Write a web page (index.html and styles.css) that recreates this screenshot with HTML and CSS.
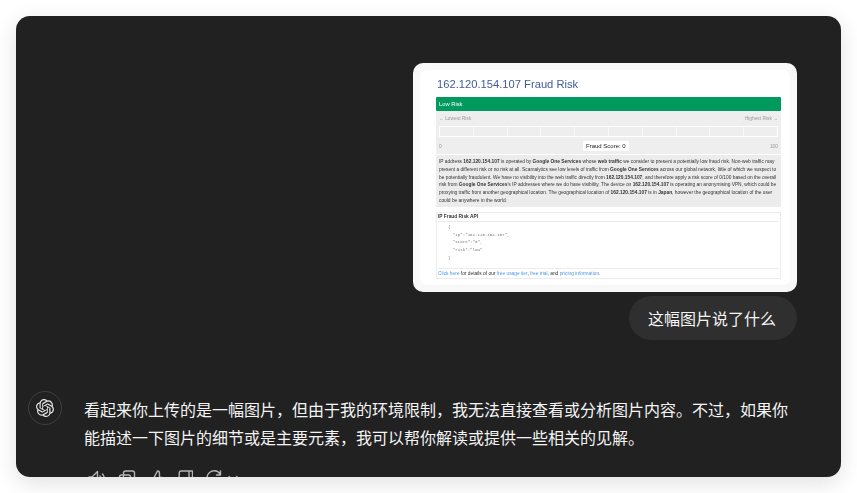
FILE: index.html
```html
<!DOCTYPE html>
<html lang="zh-CN">
<head>
<meta charset="UTF-8" />
<meta name="viewport" content="width=device-width, initial-scale=1.0" />
<title>Chat</title>
<link rel="stylesheet" href="styles.css">
</head>
<body>
<div class="chat">
  <div class="user-turn">
    <div class="shot">
      <div class="shot-inner">
        <h2 class="shot-title">162.120.154.107 Fraud Risk</h2>
        <div class="risk-head">Low Risk</div>
        <div class="risk-panel">
          <div class="risk-ends"><span>&larr; Lowest Risk</span><span>Highest Risk &rarr;</span></div>
          <div class="risk-bar">
            <i></i><i></i><i></i><i></i><i></i><i></i><i></i><i></i><i></i><i></i>
          </div>
          <div class="risk-score"><span>0</span><b>Fraud Score: 0</b><span>100</span></div>
        </div>
        <div class="risk-text">
          <div>IP address <b>162.120.154.107</b> is operated by <b>Google One Services</b> whose <b>web traffic</b> we consider to present a potentially low fraud risk. Non-web traffic may</div>
          <div>present a different risk or no risk at all. Scamalytics see low levels of traffic from <b>Google One Services</b> across our global network, little of which we suspect to</div>
          <div>be potentially fraudulent. We have no visibility into the web traffic directly from <b>162.120.154.107</b>, and therefore apply a risk score of 0/100 based on the overall</div>
          <div>risk from <b>Google One Services</b>'s IP addresses where we do have visibility. The device on <b>162.120.154.107</b> is operating an anonymising VPN, which could be</div>
          <div>proxying traffic from another geographical location. The geographical location of <b>162.120.154.107</b> is in <b>Japan</b>, however the geographical location of the user</div>
          <div>could be anywhere in the world.</div>
        </div>
        <div class="api-box">
          <div class="api-title">IP Fraud Risk API</div>
          <pre class="api-code">{
  "ip":"162.120.154.107",
  "score":"0",
  "risk":"low"
}</pre>
          <div class="api-foot"><a>Click here</a> for details of our <a>free usage tier</a>, <a>free trial</a>, and <a>pricing information</a>.</div>
        </div>
      </div>
    </div>
    <div class="bubble">这幅图片说了什么</div>
  </div>

  <div class="reply">
    <div class="avatar">
      <svg viewBox="0 0 24 24" width="18" height="18" fill="#e6e6e6"><path d="M22.2819 9.8211a5.9847 5.9847 0 0 0-.5157-4.9108 6.0462 6.0462 0 0 0-6.5098-2.9A6.0651 6.0651 0 0 0 4.9807 4.1818a5.9847 5.9847 0 0 0-3.9977 2.9 6.0462 6.0462 0 0 0 .7427 7.0966 5.98 5.98 0 0 0 .511 4.9107 6.051 6.051 0 0 0 6.5146 2.9001A5.9847 5.9847 0 0 0 13.2599 24a6.0557 6.0557 0 0 0 5.7718-4.2058 5.9894 5.9894 0 0 0 3.9977-2.9001 6.0557 6.0557 0 0 0-.7475-7.0729zm-9.022 12.6081a4.4755 4.4755 0 0 1-2.8764-1.0408l.1419-.0804 4.7783-2.7582a.7948.7948 0 0 0 .3927-.6813v-6.7369l2.02 1.1686a.071.071 0 0 1 .038.052v5.5826a4.504 4.504 0 0 1-4.4945 4.4944zm-9.6607-4.1254a4.4708 4.4708 0 0 1-.5346-3.0137l.142.0852 4.783 2.7582a.7712.7712 0 0 0 .7806 0l5.8428-3.3685v2.3324a.0804.0804 0 0 1-.0332.0615L9.74 19.9502a4.4992 4.4992 0 0 1-6.1408-1.6464zM2.3408 7.8956a4.485 4.485 0 0 1 2.3655-1.9728V11.6a.7664.7664 0 0 0 .3879.6765l5.8144 3.3543-2.0201 1.1685a.0757.0757 0 0 1-.071 0l-4.8303-2.7865A4.504 4.504 0 0 1 2.3408 7.872zm16.5963 3.8558L13.1038 8.364 15.1192 7.2a.0757.0757 0 0 1 .071 0l4.8303 2.7913a4.4944 4.4944 0 0 1-.6765 8.1042v-5.6772a.79.79 0 0 0-.407-.667zm2.0107-3.0231l-.142-.0852-4.7735-2.7818a.7759.7759 0 0 0-.7854 0L9.409 9.2297V6.8974a.0662.0662 0 0 1 .0284-.0615l4.8303-2.7866a4.4992 4.4992 0 0 1 6.6802 4.66zM8.3065 12.863l-2.02-1.1638a.0804.0804 0 0 1-.038-.0567V6.0742a4.4992 4.4992 0 0 1 7.3757-3.4537l-.142.0805L8.704 5.459a.7948.7948 0 0 0-.3927.6813zm1.0976-2.3654l2.602-1.4998 2.6069 1.4998v2.9994l-2.5974 1.4997-2.6067-1.4997Z"/></svg>
    </div>
    <div class="reply-body">
      <p class="reply-text">看起来你上传的是一幅图片，但由于我的环境限制，我无法直接查看或分析图片内容。不过，如果你能描述一下图片的细节或是主要元素，我可以帮你解读或提供一些相关的见解。</p>
      <div class="actions">
        <svg viewBox="0 0 18 18" width="18" height="18"><path d="M1 8.500l1-1.500h3l5.500-5.500v15L5 11H2zM13 6c1.500 1.500 1.500 5 0 6.500M15.500 4c2.500 3 2.500 7.500 0 10.500"/></svg>
        <svg viewBox="0 0 18 18" width="18" height="18"><rect x="5.500" y="1" width="11" height="11" rx="2"/><rect x="1.500" y="5" width="11" height="11" rx="2"/></svg>
        <svg viewBox="0 0 15 18" width="15" height="18"><path d="M4.500 8.500L8.500 1c1.500 0 2 1 2 2.500v4h2.500c1 0 1.500 1 1.300 2l-1.300 6c-.2.800-.8 1.500-1.700 1.500H1V8.500z"/></svg>
        <svg class="down" viewBox="0 0 15 18" width="15" height="18"><path d="M3 1h11.500v10H11V1M3 1C2 1 1.500 1.500 1.300 2.500L1 10c0 1 .5 1.500 1.500 1.500h3"/></svg>
        <svg viewBox="0 0 16 18" width="16" height="18"><path d="M14 4A7 7 0 1 0 15 9M14.500 1v4H10.500"/></svg>
        <svg class="more" viewBox="0 0 12 18" width="12" height="18"><path d="M2 6.500l4 4 4-4"/></svg>
      </div>
    </div>
  </div>
</div>
</body>
</html>
```

FILE: styles.css
```css
* {
  margin: 0;
  padding: 0;
  box-sizing: border-box;
}

body {
  height: 100vh;
  padding: 16px;
  background: #fff;
  font-family: "Noto Sans CJK SC", "Liberation Sans", sans-serif;
  overflow: hidden;
}

.chat {
  height: 461px;
  padding: 47px 44px 0 12px;
  border-radius: 14px;
  background: #212121;
  box-shadow: 0 6px 22px rgba(0, 0, 0, 0.12);
  overflow: hidden;
}

.user-turn {
  display: flex;
  flex-direction: column;
  align-items: flex-end;
  gap: 4px;
}

.bubble {
  height: 44px;
  padding: 0 21px 0 19px;
  border-radius: 22px;
  background: #2f2f2f;
  color: #f4f4f4;
  font-size: 16px;
  line-height: 44px;
}

/* uploaded picture */
.shot {
  width: 384px;
  height: 229px;
  padding: 7px;
  border-radius: 10px;
  background: #f8f8f8;
}

.shot-inner {
  height: 215px;
  padding: 7px 9px 0 16px;
  border-radius: 7px;
  background: #fff;
  font-family: "Liberation Sans", sans-serif;
  color: #333;
  font-size: 4.83px;
  filter: blur(0.35px);
}

.shot-title {
  height: 20px;
  padding-left: 1px;
  color: #3f5c9a;
  font-size: 11.2px;
  font-weight: 400;
  line-height: 15px;
}

.risk-head {
  height: 14px;
  padding-left: 3px;
  border-radius: 1px;
  background: #009a5e;
  color: #fff;
  font-size: 5.8px;
  line-height: 14px;
}

.risk-panel {
  height: 43px;
  padding: 4px 3px 0;
  background: #eee;
  color: #999;
}

.risk-ends,
.risk-score {
  display: flex;
  justify-content: space-between;
  align-items: center;
}

.risk-ends {
  height: 7px;
}

.risk-bar {
  display: flex;
  height: 11px;
  margin-top: 4px;
  padding: 1px;
  background: #fff;
}

.risk-bar i {
  flex: 1;
  background: #eee;
}

.risk-bar i + i {
  border-left: 1px solid #f9f9f9;
}

.risk-score {
  margin-top: 4px;
}

.risk-score b {
  padding: 2px 3px;
  background: #fff;
  color: #222;
  font-size: 6px;
  font-weight: 400;
  line-height: 6px;
}

.risk-text {
  height: 52px;
  margin-top: 1px;
  padding: 3px 3px 0;
  background: #ececec;
  line-height: 7.8px;
  white-space: nowrap;
}

.api-box {
  height: 67px;
  margin-top: 5px;
  padding: 1px;
  border: 1px solid #ececec;
}

.api-title {
  height: 8px;
  border-bottom: 1px solid #ececec;
  font-weight: 700;
  line-height: 6px;
}

.api-code {
  height: 46px;
  padding: 2px 0 0 10px;
  color: #777;
  font-family: "Liberation Mono", monospace;
  font-size: 4.1px;
  line-height: 7.7px;
}

.api-foot {
  padding-top: 1px;
  border-top: 1px solid #ececec;
  line-height: 7px;
}

.api-foot a {
  color: #4f9bea;
}

/* assistant reply */
.reply {
  display: flex;
  gap: 22px;
  margin-top: 51px;
}

.avatar {
  display: flex;
  flex: none;
  align-items: center;
  justify-content: center;
  width: 34px;
  height: 34px;
  border: 1px solid #3f3f3f;
  border-radius: 50%;
}

.reply-body {
  width: 710px;
  padding-top: 4px;
}

.reply-text {
  color: #f4f4f4;
  font-size: 16px;
  line-height: 28px;
}

.actions {
  display: flex;
  align-items: flex-start;
  gap: 13px;
  margin-top: 19px;
  padding-left: 3px;
}

.actions svg {
  flex: none;
  fill: none;
  stroke: #b4b4b4;
  stroke-width: 1.4;
  stroke-linejoin: round;
  stroke-linecap: round;
}

.actions .down {
  margin-left: 1px;
}

.actions .more {
  margin-left: -8px;
}
```
